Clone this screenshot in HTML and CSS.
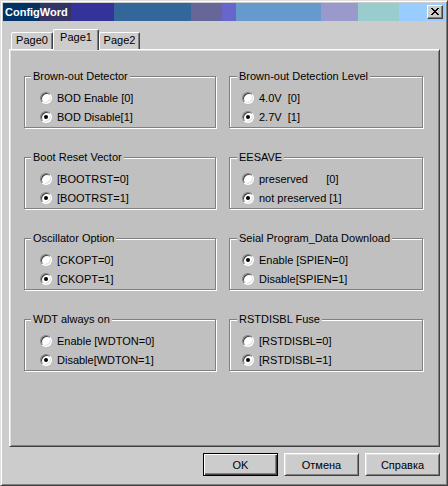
FILE: index.html
```html
<!DOCTYPE html>
<html lang="ru">
<head>
  <meta charset="UTF-8">
  <title>ConfigWord</title>
  <link rel="stylesheet" href="styles.css">
</head>
<body>
  <div class="window">
    <div class="titlebar">
      <span class="title">ConfigWord</span>
      <button class="close-btn" aria-label="Close">
        <svg width="8" height="7" viewBox="0 0 8 7">
          <path d="M0 0h2v1h1v1h2V1h1V0h2v1H7v1H6v1H5v1h1v1h1v1h1v1H6V6H5V5H3v1H2v1H0V6h1V5h1V4h1V3H2V2H1V1H0z" fill="#000"/>
        </svg>
      </button>
    </div>

    <div class="tabs">
      <div class="tab">Page0</div>
      <div class="tab active">Page1</div>
      <div class="tab">Page2</div>
    </div>

    <div class="panel">
      <div class="groups">
        <div class="group">
          <span class="group-title">Brown-out Detector</span>
          <div class="options">
            <div class="option"><span class="radio"></span>BOD Enable [0]</div>
            <div class="option"><span class="radio checked"></span>BOD Disable[1]</div>
          </div>
        </div>
        <div class="group right">
          <span class="group-title">Brown-out Detection Level</span>
          <div class="options">
            <div class="option"><span class="radio"></span>4.0V  [0]</div>
            <div class="option"><span class="radio checked"></span>2.7V  [1]</div>
          </div>
        </div>

        <div class="group">
          <span class="group-title">Boot Reset Vector</span>
          <div class="options">
            <div class="option"><span class="radio"></span>[BOOTRST=0]</div>
            <div class="option"><span class="radio checked"></span>[BOOTRST=1]</div>
          </div>
        </div>
        <div class="group right">
          <span class="group-title">EESAVE</span>
          <div class="options">
            <div class="option"><span class="radio"></span>preserved      [0]</div>
            <div class="option"><span class="radio checked"></span>not preserved [1]</div>
          </div>
        </div>

        <div class="group">
          <span class="group-title">Oscillator Option</span>
          <div class="options">
            <div class="option"><span class="radio"></span>[CKOPT=0]</div>
            <div class="option"><span class="radio checked"></span>[CKOPT=1]</div>
          </div>
        </div>
        <div class="group right">
          <span class="group-title">Seial Program_Data Download</span>
          <div class="options">
            <div class="option"><span class="radio checked"></span>Enable [SPIEN=0]</div>
            <div class="option"><span class="radio"></span>Disable[SPIEN=1]</div>
          </div>
        </div>

        <div class="group">
          <span class="group-title">WDT always on</span>
          <div class="options">
            <div class="option"><span class="radio"></span>Enable [WDTON=0]</div>
            <div class="option"><span class="radio checked"></span>Disable[WDTON=1]</div>
          </div>
        </div>
        <div class="group right">
          <span class="group-title">RSTDISBL Fuse</span>
          <div class="options">
            <div class="option"><span class="radio"></span>[RSTDISBL=0]</div>
            <div class="option"><span class="radio checked"></span>[RSTDISBL=1]</div>
          </div>
        </div>
      </div>
    </div>

    <div class="buttons">
      <button class="btn default">OK</button>
      <button class="btn">Отмена</button>
      <button class="btn">Справка</button>
    </div>
  </div>
</body>
</html>
```

FILE: styles.css
```css
:root {
  --face: #cccccc;
  --panel: #c0c0c0;
  --light: #dfdfdf;
  --shadow: #808080;
  --dark: #404040;
}

* {
  margin: 0;
  padding: 0;
  box-sizing: border-box;
}

body {
  font-family: "Liberation Sans", Arial, sans-serif;
  font-size: 11px;
  color: #000;
  background: var(--face);
}

/* Window frame */
.window {
  width: 448px;
  height: 486px;
  background: var(--face);
  border: 1px solid;
  border-color: var(--light) var(--dark) var(--dark) var(--light);
  box-shadow: inset 1px 1px #fff, inset -1px -1px var(--shadow);
  padding: 2px;
}

.titlebar {
  height: 18px;
  display: flex;
  align-items: center;
  padding-left: 2px;
  background: linear-gradient(to right,
    #003366 0 37px,
    #333366 37px 68px,
    #333399 68px 111px,
    #336699 111px 188px,
    #666699 188px 219px,
    #6666cc 219px 233px,
    #6699cc 233px 318px,
    #9999cc 318px 355px,
    #99cccc 355px 396px,
    #99ccff 396px);
}

.title {
  color: #fff;
  font-weight: bold;
  font-size: 11px;
}

.close-btn {
  margin-left: auto;
  margin-right: 2px;
  width: 16px;
  height: 14px;
  background: var(--face);
  border: 1px solid;
  border-color: #fff var(--dark) var(--dark) #fff;
  box-shadow: inset -1px -1px var(--shadow);
  display: flex;
  align-items: center;
  justify-content: center;
  padding-bottom: 1px;
}

/* Tabs */
.tabs {
  display: flex;
  align-items: flex-end;
  margin: 8px 0 0 8px;
  height: 20px;
}

.tab {
  height: 17px;
  line-height: 14px;
  text-align: center;
  background: var(--face);
  border: 1px solid;
  border-bottom: none;
  border-color: #fff var(--dark) transparent #fff;
  box-shadow: inset -1px 0 var(--shadow);
  border-radius: 2px 2px 0 0;
}

.tab:nth-child(1) { width: 42px; }
.tab:nth-child(2) { width: 46px; }
.tab:nth-child(3) { width: 41px; }

.tab.active {
  height: 21px;
  margin-bottom: -1px;
  position: relative;
  z-index: 1;
}

/* Tab panel */
.panel {
  height: 398px;
  margin: 0 5px 0 6px;
  background: var(--panel);
  border: 1px solid;
  border-color: #fff var(--dark) var(--dark) #fff;
  box-shadow: inset 1px 1px var(--light), inset -1px -1px var(--shadow);
  padding: 26px 0 0 14px;
}

.groups {
  display: grid;
  grid-template-columns: 192px 194px;
  column-gap: 13px;
  row-gap: 29px;
}

.group {
  height: 52px;
  border: 1px solid var(--shadow);
  box-shadow: inset 1px 1px #fff, 1px 1px #fff;
  padding-left: 15px;
}

.group.right {
  padding-left: 12px;
}

.group-title {
  display: block;
  width: fit-content;
  line-height: 13px;
  height: 13px;
  margin: -7px 0 0 -9px;
  padding: 0 2px;
  background: var(--panel);
  white-space: pre;
}

.group.right .group-title {
  margin-left: -5px;
}

.options {
  margin-top: 5px;
}

.option {
  display: flex;
  align-items: center;
  height: 19px;
  white-space: pre;
}

/* Classic radio button */
.radio {
  width: 12px;
  height: 12px;
  border-radius: 50%;
  background: #fff;
  border: 1px solid;
  border-color: var(--shadow) #fff #fff var(--shadow);
  box-shadow: inset 1px 1px var(--dark), inset -1px -1px var(--light);
  margin-right: 5px;
  display: flex;
  align-items: center;
  justify-content: center;
  flex-shrink: 0;
}

.radio.checked::after {
  content: "";
  width: 4px;
  height: 4px;
  border-radius: 50%;
  background: #000;
}

/* Dialog buttons */
.buttons {
  display: flex;
  justify-content: flex-end;
  gap: 6px;
  margin: 6px 5px 0 0;
}

.btn {
  width: 75px;
  height: 23px;
  font-family: "Liberation Sans", Arial, sans-serif;
  font-size: 11px;
  background: var(--face);
  border: 1px solid;
  border-color: #fff var(--dark) var(--dark) #fff;
  box-shadow: inset 1px 1px var(--light), inset -1px -1px var(--shadow);
}

.btn.default {
  border: 1px solid #000;
  box-shadow: inset 1px 1px #fff, inset -1px -1px var(--dark), inset -2px -2px var(--shadow);
}
```
